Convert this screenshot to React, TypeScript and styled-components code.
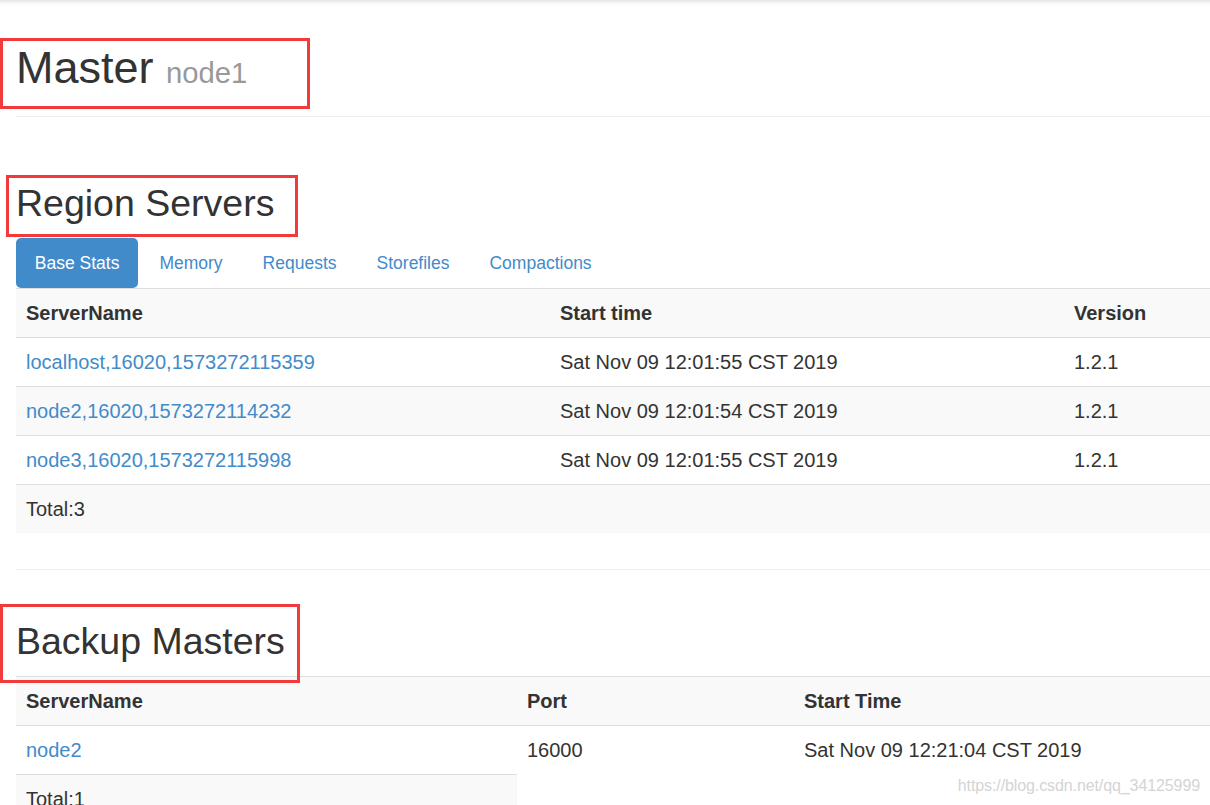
import React from "react";
import styled, { createGlobalStyle } from "styled-components";

const GlobalStyle = createGlobalStyle`
  html, body {
    margin: 0;
    padding: 0;
    background: #fff;
    overflow: hidden;
  }
  body {
    font-family: "Liberation Sans", Arial, Helvetica, sans-serif;
    font-size: 17.5px;
    line-height: 1.42857;
    color: #333;
  }
  * { box-sizing: border-box; }
`;

const Page = styled.div`
  position: relative;
  width: 1210px;
  height: 805px;
  overflow: hidden;
`;

const TopShadow = styled.div`
  height: 6px;
  background: linear-gradient(rgba(0, 0, 0, 0.1), rgba(0, 0, 0, 0.02) 60%, rgba(0, 0, 0, 0));
`;

const Container = styled.div`
  padding-left: 16px;
`;

const PageHeader = styled.div`
  margin-top: 37px;
  padding-bottom: 23.5px;
  border-bottom: 1px solid #eee;
`;

const Annotated = styled.div`
  position: relative;
`;

const RedBox = styled.div<{ $top: number; $left: number; $w: number; $h: number }>`
  position: absolute;
  top: ${(p) => p.$top}px;
  left: ${(p) => p.$left}px;
  width: ${(p) => p.$w}px;
  height: ${(p) => p.$h}px;
  border: 3px solid #f23a3c;
  pointer-events: none;
`;

const Title = styled.h1`
  margin: 0;
  font-size: 45px;
  line-height: 49.5px;
  font-weight: 500;
  color: #333;
`;

const Small = styled.small`
  font-size: 65%;
  font-weight: normal;
  line-height: 1;
  color: #999;
`;

const SectionTitle = styled.h2<{ $mt: number; $mb: number }>`
  margin: ${(p) => p.$mt}px 0 ${(p) => p.$mb}px;
  font-size: 37.5px;
  line-height: 41.25px;
  font-weight: 500;
  color: #333;
`;

const Pills = styled.ul`
  display: flex;
  list-style: none;
  margin: 0;
  padding: 0;
  gap: 2.5px;
`;

const Pill = styled.li<{ $active?: boolean }>`
  display: block;
  padding: 12.5px 18.75px;
  font-size: 17.5px;
  line-height: 25px;
  border-radius: 5px;
  background: ${(p) => (p.$active ? "#428bca" : "transparent")};
  color: ${(p) => (p.$active ? "#fff" : "#428bca")};
  cursor: pointer;
`;

const Table = styled.table`
  width: 100%;
  border-collapse: collapse;
  border-spacing: 0;
  table-layout: fixed;
  margin: 0;
  font-size: 20px;
  tbody tr:nth-child(odd) > * {
    background: #f9f9f9;
  }
`;

const Th = styled.th`
  text-align: left;
  font-weight: bold;
  padding: 10px;
  line-height: 28px;
  border-top: 1px solid #ddd;
  vertical-align: top;
  white-space: nowrap;
  overflow: hidden;
`;

const Td = styled.td`
  padding: 10px;
  line-height: 28px;
  border-top: 1px solid #ddd;
  vertical-align: top;
  white-space: nowrap;
  overflow: hidden;
`;

const Link = styled.a`
  color: #428bca;
  text-decoration: none;
`;

const Divider = styled.hr`
  margin: 36px 0 0;
  border: 0;
  border-top: 1px solid #eee;
`;

const Watermark = styled.div`
  position: absolute;
  right: 10px;
  top: 776px;
  font-size: 16px;
  line-height: 20px;
  color: #d4d4d4;
  letter-spacing: -0.1px;
  font-family: "Liberation Sans", Arial, sans-serif;
`;

const regionServers = [
  { name: "localhost,16020,1573272115359", start: "Sat Nov 09 12:01:55 CST 2019", version: "1.2.1" },
  { name: "node2,16020,1573272114232", start: "Sat Nov 09 12:01:54 CST 2019", version: "1.2.1" },
  { name: "node3,16020,1573272115998", start: "Sat Nov 09 12:01:55 CST 2019", version: "1.2.1" },
];

const tabs = ["Base Stats", "Memory", "Requests", "Storefiles", "Compactions"];

export default function App() {
  return (
    <Page>
      <GlobalStyle />
      <TopShadow />
      <Container>
        <PageHeader>
          <Annotated>
            <Title>
              Master <Small>node1</Small>
            </Title>
            <RedBox $top={-5} $left={-16} $w={310} $h={71} />
          </Annotated>
        </PageHeader>

        <Annotated>
          <SectionTitle $mt={66} $mb={13.75}>Region Servers</SectionTitle>
          <RedBox $top={-8} $left={-10} $w={292} $h={62} />
        </Annotated>
        <Pills>
          {tabs.map((t, i) => (
            <Pill key={t} $active={i === 0}>
              {t}
            </Pill>
          ))}
        </Pills>
        <Table>
          <colgroup>
            <col style={{ width: 534 }} />
            <col style={{ width: 514 }} />
            <col />
          </colgroup>
          <tbody>
            <tr>
              <Th>ServerName</Th>
              <Th>Start time</Th>
              <Th>Version</Th>
            </tr>
            {regionServers.map((r) => (
              <tr key={r.name}>
                <Td>
                  <Link href="#">{r.name}</Link>
                </Td>
                <Td>{r.start}</Td>
                <Td>{r.version}</Td>
              </tr>
            ))}
            <tr>
              <Td>Total:3</Td>
              <Td></Td>
              <Td></Td>
            </tr>
          </tbody>
        </Table>

        <Divider />

        <Annotated>
          <SectionTitle $mt={51.4} $mb={13.35}>Backup Masters</SectionTitle>
          <RedBox $top={-17} $left={-16} $w={300} $h={79} />
        </Annotated>
        <Table>
          <colgroup>
            <col style={{ width: 501 }} />
            <col style={{ width: 277 }} />
            <col />
          </colgroup>
          <tbody>
            <tr>
              <Th>ServerName</Th>
              <Th>Port</Th>
              <Th>Start Time</Th>
            </tr>
            <tr>
              <Td>
                <Link href="#">node2</Link>
              </Td>
              <Td>16000</Td>
              <Td>Sat Nov 09 12:21:04 CST 2019</Td>
            </tr>
            <tr>
              <Td>Total:1</Td>
            </tr>
          </tbody>
        </Table>
      </Container>
      <Watermark>https://blog.csdn.net/qq_34125999</Watermark>
    </Page>
  );
}
